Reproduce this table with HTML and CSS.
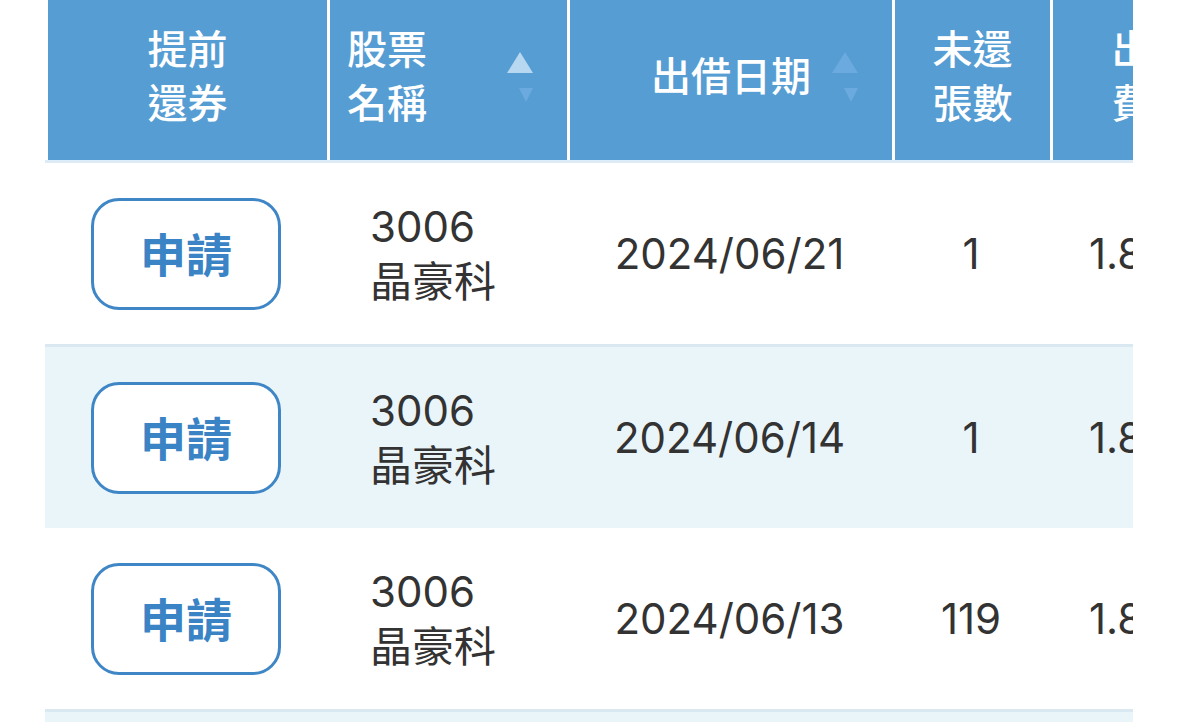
FILE: index.html
```html
<!DOCTYPE html>
<html lang="zh-Hant">
<head>
<meta charset="utf-8">
<title>出借明細</title>
<link rel="stylesheet" href="styles.css">
</head>
<body>
<div class="table-wrap">
  <div class="grid thead">
    <div class="th th-center"><span class="th-label">提前<br>還券</span></div>
    <div class="th th-sort">
      <span class="th-label">股票<br>名稱</span>
      <span class="sort">
        <svg class="tri-up on" width="26" height="21" viewBox="0 0 26 21"><polygon points="13,0 26,21 0,21"/></svg>
        <svg class="tri-down" width="14" height="14" viewBox="0 0 14 14"><polygon points="0,0 14,0 7,14"/></svg>
      </span>
    </div>
    <div class="th th-sort-center">
      <span></span>
      <span class="th-label">出借日期</span>
      <span class="sort">
        <svg class="tri-up" width="26" height="21" viewBox="0 0 26 21"><polygon points="13,0 26,21 0,21"/></svg>
        <svg class="tri-down" width="14" height="14" viewBox="0 0 14 14"><polygon points="0,0 14,0 7,14"/></svg>
      </span>
    </div>
    <div class="th th-center"><span class="th-label">未還<br>張數</span></div>
    <div class="th th-center"><span class="th-label">出借<br>費率</span></div>
  </div>

  <div class="grid tr">
    <div class="td td-center"><button class="btn-apply">申請</button></div>
    <div class="td td-stock">3006<br>晶豪科</div>
    <div class="td td-center">2024/06/21</div>
    <div class="td td-center">1</div>
    <div class="td td-center">1.80%</div>
  </div>
  <div class="grid tr tr-alt">
    <div class="td td-center"><button class="btn-apply">申請</button></div>
    <div class="td td-stock">3006<br>晶豪科</div>
    <div class="td td-center">2024/06/14</div>
    <div class="td td-center">1</div>
    <div class="td td-center">1.80%</div>
  </div>
  <div class="grid tr">
    <div class="td td-center"><button class="btn-apply">申請</button></div>
    <div class="td td-stock">3006<br>晶豪科</div>
    <div class="td td-center">2024/06/13</div>
    <div class="td td-center">119</div>
    <div class="td td-center">1.80%</div>
  </div>
  <div class="grid tr tr-alt">
    <div class="td td-center"><button class="btn-apply">申請</button></div>
    <div class="td td-stock">3006<br>晶豪科</div>
    <div class="td td-center">2024/06/12</div>
    <div class="td td-center">5</div>
    <div class="td td-center">1.80%</div>
  </div>
</div>
</body>
</html>
```

FILE: styles.css
```css
html, body {
  margin: 0;
  padding: 0;
  background: #ffffff;
}

body {
  font-family: "Inter", "Noto Sans CJK TC", sans-serif;
  color: #333333;
  height: 722px;
  overflow: hidden;
}

.table-wrap {
  margin-left: 45px;
  width: 1088px;
  overflow: hidden;
}

.grid {
  display: grid;
  grid-template-columns: 282px 240px 325px 158px 200px;
}

.thead {
  height: 160px;
  border-bottom: 3px solid #dcebf5;
}

.th {
  background: #569dd3;
  color: #ffffff;
  font-family: "Noto Sans CJK TC", sans-serif;
  font-weight: 500;
  font-size: 40px;
  line-height: 54px;
  border-left: 3px solid #ffffff;
  display: flex;
  align-items: center;
  box-sizing: border-box;
  padding-bottom: 12px;
}

.th:first-child {
  border-left: none;
  margin-left: 3px;
}

.th-center {
  justify-content: center;
  text-align: center;
}

.th-sort {
  justify-content: space-between;
  padding: 0 34px 12px 17px;
}

.th-sort-center {
  display: grid;
  grid-template-columns: 1fr auto 1fr;
  align-items: center;
}

.th-sort-center .sort {
  justify-self: end;
  margin-right: 34px;
}

.sort {
  display: flex;
  flex-direction: column;
  align-items: flex-end;
  gap: 15px;
  margin-top: 6px;
}

.sort svg {
  display: block;
  fill: #6aaade;
}

.sort svg.on {
  fill: #b7d8f0;
}

.tr {
  height: 181px;
}

.tr-alt {
  background: #eaf5fa;
  border-top: 3px solid #dae8f1;
}

.td {
  display: flex;
  align-items: center;
  font-size: 42px;
  line-height: 55px;
  color: #333333;
}

.td-center {
  justify-content: center;
  text-align: center;
}

.td-stock {
  padding-left: 43px;
}

.btn-apply {
  width: 190px;
  height: 112px;
  box-sizing: border-box;
  border: 3px solid #3f86c6;
  border-radius: 28px;
  background: #ffffff;
  color: #3a83c5;
  font-family: "Noto Sans CJK TC", sans-serif;
  font-weight: 700;
  font-size: 46px;
  padding: 0 0 4px 0;
}
```
